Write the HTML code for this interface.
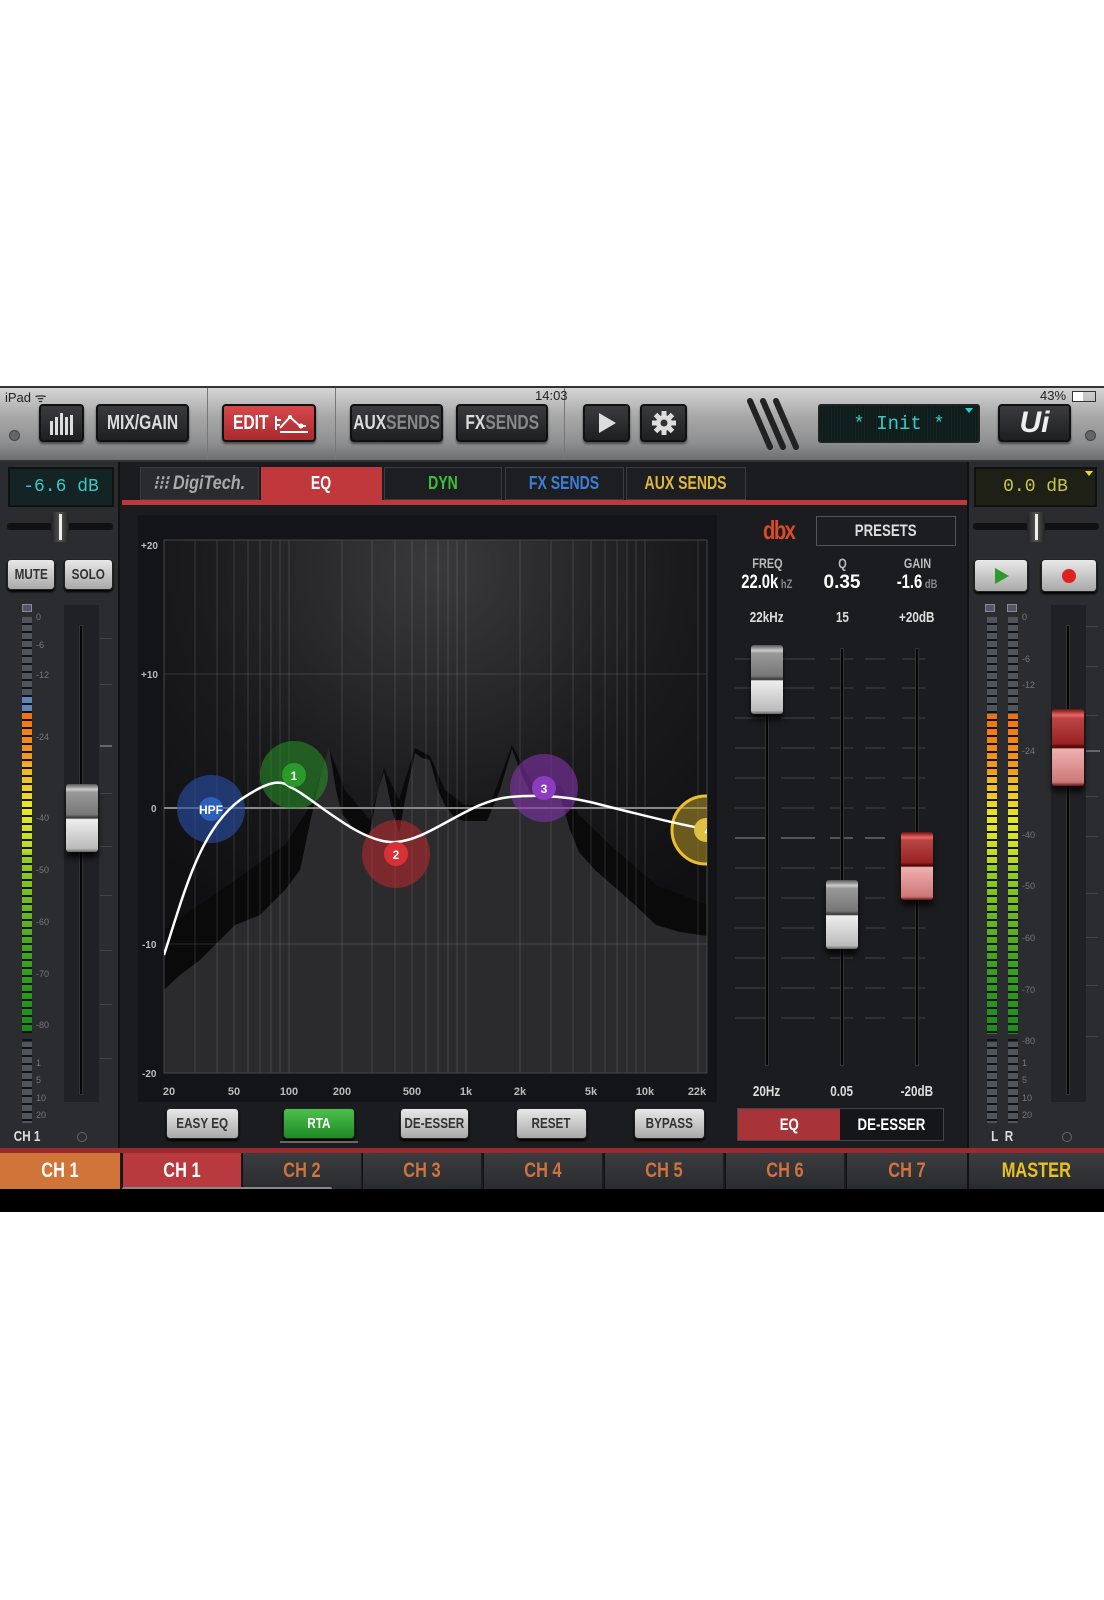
<!DOCTYPE html>
<html><head><meta charset="utf-8"><style>
*{margin:0;padding:0;box-sizing:border-box}
body{width:1104px;height:1600px;background:#fff;position:relative;overflow:hidden;font-family:"Liberation Sans",sans-serif;font-weight:bold}
.a{position:absolute}
.n{display:inline-block;transform:scaleX(.78);white-space:nowrap}
.btn{position:absolute;background:linear-gradient(#3a3b3d,#1e1f21);border:2px solid #111;border-radius:4px;color:#ddd;font-size:20px;display:flex;align-items:center;justify-content:center;box-shadow:0 2px 2px rgba(0,0,0,.5);white-space:nowrap}
.lbtn{position:absolute;background:linear-gradient(#e8e8e8,#a9a9a9);border:1px solid #222;border-radius:4px;color:#333;font-size:15px;display:flex;align-items:center;justify-content:center;box-shadow:0 2px 2px #000;white-space:nowrap}
.tab{position:absolute;top:467px;height:33px;background:#1d1e21;border:1px solid #3a3b3e;font-size:18px;display:flex;align-items:center;justify-content:center;white-space:nowrap}
.ch{position:absolute;top:1153px;height:36px;width:119px;background:linear-gradient(#3b3c3f,#2a2b2e);border-left:1px solid #111;color:#d0733e;font-size:21px;display:flex;align-items:center;justify-content:center}
.lbl{position:absolute;color:#ccc;font-size:14px;text-align:center;white-space:nowrap}
.cap{position:absolute;width:32px;border-radius:3px;background:linear-gradient(#555 0%,#ccc 8%,#999 12%,#777 45%,#333 50%,#eee 52%,#bbb 95%,#666 100%);box-shadow:0 6px 6px rgba(0,0,0,.7)}
.rcap{position:absolute;width:32px;border-radius:3px;background:linear-gradient(#611 0%,#e66 8%,#b44 12%,#922 45%,#400 50%,#f0b0b0 52%,#c77 95%,#611 100%);box-shadow:0 6px 6px rgba(0,0,0,.7)}
.trk{position:absolute;width:4px;background:#050505;border:1px solid #333}
.tick{position:absolute;height:1px;background:#444}
.meter{position:absolute;width:10px}
.seg{position:absolute;left:0;width:10px}
.segmask{position:absolute;inset:0;background:repeating-linear-gradient(transparent 0 6px,#111 6px 8px)}
.ml{position:absolute;color:#777;font-size:9px;font-weight:normal}
</style></head><body>
<div class="a" style="left:0;top:386px;width:1104px;height:826px;background:#1b1c1f"></div>
<div class="a" style="left:0;top:386px;width:1104px;height:76px;background:linear-gradient(#d4d4d4,#a8a8a8 40%,#8f9091 75%,#6e6f70);border-top:2px solid #333;border-bottom:2px solid #333"></div>
<div class="a" style="left:207px;top:388px;width:1px;height:72px;background:#777"></div>
<div class="a" style="left:335px;top:388px;width:1px;height:72px;background:#777"></div>
<div class="a" style="left:564px;top:388px;width:1px;height:72px;background:#777"></div>
<div class="a" style="left:5px;top:388px;font-size:13px;color:#222;font-weight:normal">iPad ᯤ</div>
<div class="a" style="left:535px;top:388px;font-size:13px;color:#222;font-weight:normal">14:03</div>
<div class="a" style="left:1040px;top:388px;font-size:13px;color:#222;font-weight:normal">43%</div>
<div class="a" style="left:1072px;top:391px;width:24px;height:11px;border:1px solid #333;background:linear-gradient(90deg,#fff 45%,transparent 45%)"></div>
<div class="a" style="left:9px;top:430px;width:11px;height:11px;border-radius:50%;background:#666;border:1px solid #444"></div>
<div class="a" style="left:1085px;top:430px;width:11px;height:11px;border-radius:50%;background:#666;border:1px solid #444"></div>
<div class="btn" style="left:39px;top:404px;width:45px;height:38px"><svg width="28" height="24"><g fill="#ddd"><rect x="2" y="10" width="3" height="14"/><rect x="7" y="6" width="3" height="18"/><rect x="12" y="2" width="3" height="22"/><rect x="17" y="6" width="3" height="18"/><rect x="22" y="4" width="3" height="20"/></g></svg></div>
<div class="btn" style="left:96px;top:404px;width:93px;height:38px"><span class="n">MIX/GAIN</span></div>
<div class="btn" style="left:222px;top:404px;width:94px;height:38px;background:linear-gradient(#d6484c,#a92a2e);color:#fff"><span class="n">EDIT</span><svg width="36" height="22"><path d="M2 4v14M2 8h5M2 13h4M6 16 L16 5 L26 14 L32 14 M6 20h28" stroke="#fff" stroke-width="2" fill="none"/><circle cx="16" cy="5" r="2" fill="#fff"/><circle cx="27" cy="14" r="2.5" fill="#fff"/></svg></div>
<div class="btn" style="left:350px;top:404px;width:93px;height:38px"><span class="n">AUX<span style="color:#888">SENDS</span></span></div>
<div class="btn" style="left:456px;top:404px;width:92px;height:38px"><span class="n">FX<span style="color:#888">SENDS</span></span></div>
<div class="btn" style="left:583px;top:404px;width:47px;height:38px"><svg width="22" height="24"><path d="M3 2 L20 12 L3 22Z" fill="#ddd"/></svg></div>
<div class="btn" style="left:640px;top:404px;width:47px;height:38px"><svg width="26" height="26" viewBox="-13 -13 26 26"><g fill="#ddd"><circle r="8"/><rect x="-2.5" y="-12" width="5" height="24"/><rect x="-2.5" y="-12" width="5" height="24" transform="rotate(45)"/><rect x="-2.5" y="-12" width="5" height="24" transform="rotate(90)"/><rect x="-2.5" y="-12" width="5" height="24" transform="rotate(135)"/></g><circle r="3.5" fill="#333"/></svg></div>
<svg class="a" style="left:745px;top:395px" width="60" height="60"><g stroke="#222" stroke-width="6" stroke-linecap="round"><path d="M5 6 L25 52"/><path d="M18 6 L38 52"/><path d="M31 6 L51 52"/></g></svg>
<div class="a" style="left:818px;top:404px;width:162px;height:39px;background:repeating-linear-gradient(90deg,#0f1c1c 0 2px,#132222 2px 3px);border:2px solid #222;border-radius:3px;color:#3cc7c4;font-size:19px;font-weight:normal;font-family:'Liberation Mono',monospace;display:flex;align-items:center;justify-content:center">* Init *</div>
<div class="a" style="left:965px;top:408px;width:0;height:0;border:4px solid transparent;border-top:5px solid #3cc"></div>
<div class="btn" style="left:998px;top:404px;width:73px;height:38px;font-size:30px;font-style:italic;color:#eee">Ui</div>

<!-- left strip -->
<div class="a" style="left:0;top:462px;width:120px;height:691px;background:#2a2c2f;border-right:2px solid #111"></div>
<div class="a" style="left:8px;top:467px;width:106px;height:40px;background:#142424;border:2px solid #111;color:#3cc7c4;font-family:'Liberation Mono',monospace;font-weight:normal;font-size:18px;display:flex;align-items:center;justify-content:center">-6.6 dB</div>
<div class="a" style="left:7px;top:523px;width:106px;height:7px;background:#111;border-radius:3px"></div>
<div class="a" style="left:51px;top:512px;width:18px;height:30px;background:linear-gradient(90deg,#222,#555,#222);border-radius:3px"></div>
<div class="a" style="left:59px;top:514px;width:3px;height:26px;background:#eee"></div>
<div class="lbtn" style="left:7px;top:559px;width:48px;height:31px"><span class="n">MUTE</span></div>
<div class="lbtn" style="left:64px;top:559px;width:49px;height:31px"><span class="n">SOLO</span></div>
<div class="a" style="left:22px;top:604px;width:10px;height:8px;background:#556;border:1px solid #889"></div>
<div class="meter" style="left:22px;top:617px;height:506px">
 <div class="seg" style="top:0;height:78px;background:#50555c"></div>
 <div class="seg" style="top:78px;height:18px;background:#5e86b8"></div>
 <div class="seg" style="top:96px;height:50px;background:linear-gradient(#f07010,#f0a020)"></div>
 <div class="seg" style="top:146px;height:90px;background:linear-gradient(#f0b020,#e8e820 50%,#b8d820)"></div>
 <div class="seg" style="top:236px;height:180px;background:linear-gradient(#9cd020,#3aa020 60%,#1c8a1c)"></div>
 <div class="seg" style="top:425px;height:81px;background:#50555c"></div>
 <div class="segmask"></div>
</div>
<div class="ml" style="left:36px;top:612px">0</div><div class="ml" style="left:36px;top:640px">-6</div><div class="ml" style="left:36px;top:670px">-12</div><div class="ml" style="left:36px;top:732px">-24</div><div class="ml" style="left:36px;top:813px">-40</div><div class="ml" style="left:36px;top:865px">-50</div><div class="ml" style="left:36px;top:917px">-60</div><div class="ml" style="left:36px;top:969px">-70</div><div class="ml" style="left:36px;top:1020px">-80</div><div class="ml" style="left:36px;top:1058px">1</div><div class="ml" style="left:36px;top:1075px">5</div><div class="ml" style="left:36px;top:1093px">10</div><div class="ml" style="left:36px;top:1110px">20</div>
<div class="a" style="left:64px;top:605px;width:35px;height:497px;background:#202124"></div>
<div class="trk" style="left:79px;top:625px;height:470px"></div>
<div class="tick" style="left:100px;top:638px;width:12px"></div><div class="tick" style="left:100px;top:684px;width:12px"></div><div class="tick" style="left:100px;top:745px;width:12px;background:#666;height:2px"></div><div class="tick" style="left:100px;top:793px;width:12px"></div><div class="tick" style="left:100px;top:846px;width:12px"></div><div class="tick" style="left:100px;top:895px;width:12px"></div><div class="tick" style="left:100px;top:950px;width:12px"></div><div class="tick" style="left:100px;top:1004px;width:12px"></div><div class="tick" style="left:100px;top:1058px;width:12px"></div>
<div class="cap" style="left:66px;top:784px;height:68px"></div>
<div class="a" style="left:10px;top:1128px;color:#ddd;font-size:15px"><span class="n">CH 1</span></div>
<div class="a" style="left:77px;top:1132px;width:10px;height:10px;border-radius:50%;border:1px solid #666"></div>

<!-- right strip -->
<div class="a" style="left:967px;top:462px;width:137px;height:691px;background:#2a2c2f;border-left:2px solid #111"></div>
<div class="a" style="left:974px;top:467px;width:123px;height:40px;background:#1e2016;border:2px solid #111;color:#c7c74a;font-family:'Liberation Mono',monospace;font-weight:normal;font-size:18px;display:flex;align-items:center;justify-content:center">0.0 dB</div>
<div class="a" style="left:1085px;top:471px;border:4px solid transparent;border-top:5px solid #dd3"></div>
<div class="a" style="left:973px;top:523px;width:126px;height:7px;background:#111;border-radius:3px"></div>
<div class="a" style="left:1027px;top:512px;width:18px;height:30px;background:linear-gradient(90deg,#222,#555,#222);border-radius:3px"></div>
<div class="a" style="left:1035px;top:514px;width:3px;height:26px;background:#eee"></div>
<div class="lbtn" style="left:974px;top:559px;width:54px;height:33px"><svg width="18" height="18"><path d="M3 1 L17 9 L3 17Z" fill="#2a9a2a"/></svg></div>
<div class="lbtn" style="left:1041px;top:559px;width:56px;height:33px"><svg width="18" height="18"><circle cx="9" cy="9" r="7" fill="#d22"/></svg></div>
<div class="a" style="left:985px;top:604px;width:10px;height:8px;background:#556;border:1px solid #889"></div>
<div class="a" style="left:1007px;top:604px;width:10px;height:8px;background:#556;border:1px solid #889"></div>
<div class="meter" style="left:987px;top:617px;height:506px">
 <div class="seg" style="top:0;height:97px;background:#50555c"></div>
 <div class="seg" style="top:97px;height:60px;background:linear-gradient(#f07010,#f0a020)"></div>
 <div class="seg" style="top:157px;height:90px;background:linear-gradient(#f0b020,#e8e820 50%,#b8d820)"></div>
 <div class="seg" style="top:247px;height:170px;background:linear-gradient(#9cd020,#3aa020 60%,#1c8a1c)"></div>
 <div class="seg" style="top:425px;height:81px;background:#50555c"></div>
 <div class="segmask"></div>
</div>
<div class="meter" style="left:1008px;top:617px;height:506px">
 <div class="seg" style="top:0;height:97px;background:#50555c"></div>
 <div class="seg" style="top:97px;height:60px;background:linear-gradient(#f07010,#f0a020)"></div>
 <div class="seg" style="top:157px;height:90px;background:linear-gradient(#f0b020,#e8e820 50%,#b8d820)"></div>
 <div class="seg" style="top:247px;height:170px;background:linear-gradient(#9cd020,#3aa020 60%,#1c8a1c)"></div>
 <div class="seg" style="top:425px;height:81px;background:#50555c"></div>
 <div class="segmask"></div>
</div>
<div class="ml" style="left:1022px;top:612px">0</div><div class="ml" style="left:1022px;top:654px">-6</div><div class="ml" style="left:1022px;top:680px">-12</div><div class="ml" style="left:1022px;top:746px">-24</div><div class="ml" style="left:1022px;top:830px">-40</div><div class="ml" style="left:1022px;top:881px">-50</div><div class="ml" style="left:1022px;top:933px">-60</div><div class="ml" style="left:1022px;top:985px">-70</div><div class="ml" style="left:1022px;top:1036px">-80</div><div class="ml" style="left:1022px;top:1058px">1</div><div class="ml" style="left:1022px;top:1075px">5</div><div class="ml" style="left:1022px;top:1093px">10</div><div class="ml" style="left:1022px;top:1110px">20</div>
<div class="a" style="left:1051px;top:605px;width:35px;height:497px;background:#202124"></div>
<div class="trk" style="left:1066px;top:625px;height:470px"></div>
<div class="tick" style="left:1086px;top:626px;width:12px"></div><div class="tick" style="left:1086px;top:666px;width:12px"></div><div class="tick" style="left:1086px;top:715px;width:12px"></div><div class="tick" style="left:1086px;top:750px;width:14px;background:#666;height:2px"></div><div class="tick" style="left:1086px;top:796px;width:12px"></div><div class="tick" style="left:1086px;top:836px;width:12px"></div><div class="tick" style="left:1086px;top:893px;width:12px"></div><div class="tick" style="left:1086px;top:937px;width:12px"></div><div class="tick" style="left:1086px;top:985px;width:12px"></div><div class="tick" style="left:1086px;top:1036px;width:12px"></div>
<div class="rcap" style="left:1052px;top:709px;height:77px"></div>
<div class="a" style="left:988px;top:1128px;color:#ddd;font-size:15px"><span class="n">L&nbsp;&nbsp;R</span></div>
<div class="a" style="left:1062px;top:1132px;width:10px;height:10px;border-radius:50%;border:1px solid #666"></div>

<!-- tabs -->
<div class="tab" style="left:140px;width:119px;color:#aaa;font-size:19px;font-style:italic;background:#2a2b2e"><span class="n" style="transform:scaleX(.85)">⁝⁝⁝ DigiTech.</span></div>
<div class="tab" style="left:261px;width:121px;background:#c0383c;border-color:#c0383c;color:#fff"><span class="n">EQ</span></div>
<div class="tab" style="left:384px;width:118px;color:#3cbf3c"><span class="n">DYN</span></div>
<div class="tab" style="left:505px;width:119px;color:#3d7fd8"><span class="n">FX SENDS</span></div>
<div class="tab" style="left:626px;width:120px;color:#e0b83a"><span class="n">AUX SENDS</span></div>
<div class="a" style="left:122px;top:500px;width:845px;height:5px;background:#c0383c"></div>

<!-- graph panel -->
<div class="a" style="left:138px;top:515px;width:579px;height:587px;background:#131417"></div>
<svg class="a" style="left:138px;top:515px" width="579" height="587" viewBox="138 515 579 587">
<defs><radialGradient id="g" cx="0.5" cy="0.05" r="0.75"><stop offset="0" stop-color="#3a3a3c"/><stop offset="0.6" stop-color="#1a1a1c"/><stop offset="1" stop-color="#101012"/></radialGradient></defs>
<rect x="164" y="540" width="543" height="533" fill="url(#g)"/>
<polygon fill="#0a0a0b" points="164,930 235,880 285,845 311,805 329,748 345,790 370,820 384,768 399,800 415,748 430,756 445,790 464,805 490,805 512,745 533,785 560,785 579,815 610,845 656,885 707,905 707,1073 164,1073"/>
<polygon fill="#2b2b2d" points="164,990 180,975 200,960 235,925 260,915 285,890 300,870 311,818 322,770 329,747 336,790 342,814 355,830 369,837 378,790 384,772 392,810 399,833 407,790 415,753 422,758 430,760 438,790 445,806 455,818 464,821 487,821 500,790 512,749 522,775 533,798 545,800 560,795 570,830 579,852 595,870 610,883 635,905 656,925 680,932 707,936 707,1073 164,1073"/>
<g stroke="rgba(255,255,255,0.13)" stroke-width="1">
<line x1="195" y1="540" x2="195" y2="1073"/><line x1="217" y1="540" x2="217" y2="1073"/><line x1="234" y1="540" x2="234" y2="1073"/><line x1="248" y1="540" x2="248" y2="1073"/><line x1="260" y1="540" x2="260" y2="1073"/><line x1="271" y1="540" x2="271" y2="1073"/><line x1="280" y1="540" x2="280" y2="1073"/><line x1="289" y1="540" x2="289" y2="1073"/>
<line x1="342" y1="540" x2="342" y2="1073"/><line x1="372" y1="540" x2="372" y2="1073"/><line x1="395" y1="540" x2="395" y2="1073"/><line x1="412" y1="540" x2="412" y2="1073"/><line x1="426" y1="540" x2="426" y2="1073"/><line x1="438" y1="540" x2="438" y2="1073"/><line x1="448" y1="540" x2="448" y2="1073"/><line x1="457" y1="540" x2="457" y2="1073"/><line x1="466" y1="540" x2="466" y2="1073"/>
<line x1="520" y1="540" x2="520" y2="1073"/><line x1="551" y1="540" x2="551" y2="1073"/><line x1="573" y1="540" x2="573" y2="1073"/><line x1="591" y1="540" x2="591" y2="1073"/><line x1="605" y1="540" x2="605" y2="1073"/><line x1="617" y1="540" x2="617" y2="1073"/><line x1="627" y1="540" x2="627" y2="1073"/><line x1="636" y1="540" x2="636" y2="1073"/><line x1="645" y1="540" x2="645" y2="1073"/><line x1="698" y1="540" x2="698" y2="1073"/>
<line x1="164" y1="674" x2="707" y2="674"/><line x1="164" y1="944" x2="707" y2="944"/>
</g>
<rect x="164" y="540" width="543" height="533" fill="none" stroke="#444" stroke-width="1"/>
<line x1="164" y1="808" x2="707" y2="808" stroke="#888" stroke-width="2"/>
<g font-family="Liberation Sans, sans-serif" font-size="10" fill="#bbb" font-weight="bold">
<text x="141" y="549">+20</text><text x="141" y="678">+10</text><text x="151" y="812">0</text><text x="142" y="948">-10</text><text x="142" y="1077">-20</text>
</g>
<g font-family="Liberation Sans, sans-serif" font-size="11" fill="#bbb" font-weight="bold" text-anchor="middle">
<text x="169" y="1095">20</text><text x="234" y="1095">50</text><text x="289" y="1095">100</text><text x="342" y="1095">200</text><text x="412" y="1095">500</text><text x="466" y="1095">1k</text><text x="520" y="1095">2k</text><text x="591" y="1095">5k</text><text x="645" y="1095">10k</text><text x="697" y="1095">22k</text>
</g>
<svg x="164" y="540" width="543" height="533" viewBox="164 540 543 533">
<circle cx="211" cy="809" r="34" fill="rgba(40,80,170,0.6)"/>
<circle cx="294" cy="775" r="34" fill="rgba(40,150,40,0.55)"/>
<circle cx="396" cy="854" r="34" fill="rgba(190,40,45,0.55)"/>
<circle cx="544" cy="788" r="34" fill="rgba(130,50,170,0.6)"/>
<circle cx="706" cy="830" r="34" fill="rgba(180,150,40,0.55)" stroke="#e8c030" stroke-width="3"/>
<path d="M164 955 C185 890 200 830 240 800 C265 783 280 778 290 787 C310 795 360 845 396 842 C430 840 470 800 510 797 C530 795 560 795 590 802 C630 812 680 825 706 829" stroke="#fff" stroke-width="2.5" fill="none"/>
<circle cx="211" cy="809" r="12" fill="#2c5fb8"/>
<circle cx="294" cy="775" r="12" fill="#2b9a2b"/>
<circle cx="396" cy="854" r="12" fill="#d63236"/>
<circle cx="544" cy="788" r="12" fill="#8c3cc0"/>
<circle cx="706" cy="830" r="12" fill="#e0c040"/>
<g font-family="Liberation Sans, sans-serif" font-size="12" fill="#fff" font-weight="bold" text-anchor="middle">
<text x="211" y="814">HPF</text><text x="294" y="780">1</text><text x="396" y="859">2</text><text x="544" y="793">3</text><text x="708" y="835">4</text>
</g>
</svg>
</svg>

<!-- buttons under graph -->
<div class="lbtn" style="left:166px;top:1108px;width:73px;height:31px"><span class="n">EASY EQ</span></div>
<div class="lbtn" style="left:283px;top:1108px;width:72px;height:31px;background:linear-gradient(#4cc04c,#1f8a25);color:#fff"><span class="n">RTA</span></div>
<div class="a" style="left:280px;top:1141px;width:78px;height:2px;background:#666"></div>
<div class="lbtn" style="left:400px;top:1108px;width:69px;height:31px"><span class="n">DE-ESSER</span></div>
<div class="lbtn" style="left:516px;top:1108px;width:71px;height:31px"><span class="n">RESET</span></div>
<div class="lbtn" style="left:634px;top:1108px;width:71px;height:31px"><span class="n">BYPASS</span></div>
<div class="a" style="left:737px;top:1108px;width:207px;height:33px;border:1px solid #444;background:#15161a"></div>
<div class="a" style="left:738px;top:1109px;width:102px;height:31px;background:#a8343a;color:#fff;font-size:17px;display:flex;align-items:center;justify-content:center"><span class="n">EQ</span></div>
<div class="a" style="left:840px;top:1109px;width:103px;height:31px;color:#fff;font-size:17px;display:flex;align-items:center;justify-content:center"><span class="n">DE-ESSER</span></div>

<!-- right controls -->
<div class="a" style="left:763px;top:515px;color:#d84a2a;font-size:26px;letter-spacing:-2px"><span class="n" style="transform-origin:left">dbx</span></div>
<div class="a" style="left:816px;top:516px;width:140px;height:30px;border:1px solid #555;background:#1c1d20;color:#ddd;font-size:17px;display:flex;align-items:center;justify-content:center"><span class="n">PRESETS</span></div>
<div class="lbl" style="left:727px;top:555px;width:80px;color:#bbb"><span class="n">FREQ</span></div>
<div class="lbl" style="left:802px;top:555px;width:80px;color:#bbb"><span class="n">Q</span></div>
<div class="lbl" style="left:877px;top:555px;width:80px;color:#bbb"><span class="n">GAIN</span></div>
<div class="lbl" style="left:717px;top:572px;width:100px;color:#fff;font-size:19px"><span class="n">22.0k<span style="font-size:12px;color:#888"> hZ</span></span></div>
<div class="lbl" style="left:802px;top:572px;width:80px;color:#fff;font-size:19px">0.35</div>
<div class="lbl" style="left:867px;top:572px;width:100px;color:#fff;font-size:19px"><span class="n">-1.6<span style="font-size:12px;color:#888"> dB</span></span></div>
<div class="lbl" style="left:727px;top:609px;width:80px;color:#ddd;font-size:15px"><span class="n">22kHz</span></div>
<div class="lbl" style="left:802px;top:609px;width:80px;color:#ddd;font-size:15px"><span class="n">15</span></div>
<div class="lbl" style="left:877px;top:609px;width:80px;color:#ddd;font-size:15px"><span class="n">+20dB</span></div>
<div class="lbl" style="left:727px;top:1083px;width:80px;color:#ddd;font-size:15px"><span class="n">20Hz</span></div>
<div class="lbl" style="left:802px;top:1083px;width:80px;color:#ddd;font-size:15px"><span class="n">0.05</span></div>
<div class="lbl" style="left:877px;top:1083px;width:80px;color:#ddd;font-size:15px"><span class="n">-20dB</span></div>
<svg class="a" style="left:735px;top:640px" width="210" height="430">
<g stroke="#3c3d40" stroke-width="1.2">
<path d="M0 19H30M46 19H80M95 19H118M130 19H150M167 19H190"/>
<path d="M0 48H30M46 48H80M95 48H118M130 48H150M167 48H190"/>
<path d="M0 78H30M46 78H80M95 78H118M130 78H150M167 78H190"/>
<path d="M0 108H30M46 108H80M95 108H118M130 108H150M167 108H190"/>
<path d="M0 138H30M46 138H80M95 138H118M130 138H150M167 138H190"/>
<path d="M0 168H30M46 168H80M95 168H118M130 168H150M167 168H190"/>
<path d="M0 228H30M46 228H80M95 228H118M130 228H150M167 228H190"/>
<path d="M0 258H30M46 258H80M95 258H118M130 258H150M167 258H190"/>
<path d="M0 288H30M46 288H80M95 288H118M130 288H150M167 288H190"/>
<path d="M0 318H30M46 318H80M95 318H118M130 318H150M167 318H190"/>
<path d="M0 348H30M46 348H80M95 348H118M130 348H150M167 348H190"/>
<path d="M0 378H30M46 378H80M95 378H118M130 378H150M167 378H190"/>
</g>
<path d="M0 198H30M46 198H80M95 198H118M130 198H150M167 198H190" stroke="#555" stroke-width="2"/>
</svg>
<div class="trk" style="left:765px;top:648px;height:418px"></div>
<div class="trk" style="left:840px;top:648px;height:418px"></div>
<div class="trk" style="left:915px;top:648px;height:418px"></div>
<div class="cap" style="left:751px;top:645px;height:69px"></div>
<div class="cap" style="left:826px;top:880px;height:69px"></div>
<div class="rcap" style="left:901px;top:832px;height:68px"></div>

<!-- bottom tabs -->
<div class="a" style="left:0;top:1148px;width:1104px;height:5px;background:#9a2a2e"></div>
<div class="a" style="left:0;top:1153px;width:120px;height:36px;background:#d0743a;color:#fff;font-size:21px;display:flex;align-items:center;justify-content:center"><span class="n">CH 1</span></div>
<div class="ch" style="left:122px;background:#b83a3e;color:#fff"><span class="n">CH 1</span></div>
<div class="ch" style="left:242px"><span class="n">CH 2</span></div>
<div class="ch" style="left:362px"><span class="n">CH 3</span></div>
<div class="ch" style="left:483px"><span class="n">CH 4</span></div>
<div class="ch" style="left:604px"><span class="n">CH 5</span></div>
<div class="ch" style="left:725px"><span class="n">CH 6</span></div>
<div class="ch" style="left:846px;width:121px"><span class="n">CH 7</span></div>
<div class="ch" style="left:967px;width:137px;color:#e8c21e;border-left:2px solid #111"><span class="n">MASTER</span></div>
<div class="a" style="left:122px;top:1187px;width:210px;height:4px;background:#888;border-radius:2px"></div>
<div class="a" style="left:0;top:1189px;width:1104px;height:23px;background:#000"></div>
</body></html>
